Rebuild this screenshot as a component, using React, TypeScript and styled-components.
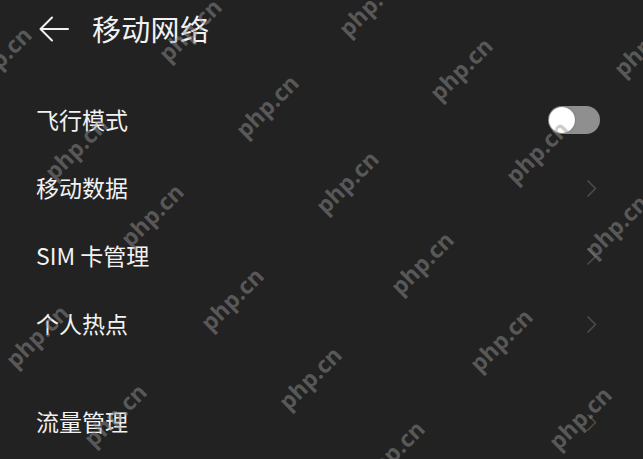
import React, { useState } from "react";
import styled, { createGlobalStyle } from "styled-components";

const GlobalStyle = createGlobalStyle`
  html, body {
    margin: 0;
    padding: 0;
    background: #222222;
  }
  body {
    font-family: "Noto Sans CJK SC", "Noto Sans", sans-serif;
    color: #f2f2f2;
    overflow: hidden;
  }
`;

const Screen = styled.div`
  position: relative;
  width: 643px;
  height: 459px;
  overflow: hidden;
  background: #222222;
`;

const Header = styled.header`
  display: flex;
  align-items: center;
  height: 56px;
  padding-left: 39px;
`;

const BackButton = styled.button`
  display: flex;
  align-items: center;
  margin-top: 2px;
  padding: 0;
  border: 0;
  background: none;
  color: #f2f2f2;
  cursor: pointer;
`;

const Title = styled.h1`
  margin: 0 0 0 23px;
  font-size: 29px;
  font-weight: 400;
  line-height: 1;
  letter-spacing: 0.3px;
`;

const List = styled.div`
  display: flex;
  flex-direction: column;
  margin-top: 30px;
  padding: 0 43px 0 36px;
`;

const Group = styled.div<{ $gap?: number }>`
  display: flex;
  flex-direction: column;
  margin-top: ${(p) => p.$gap ?? 0}px;
`;

const Row = styled.div`
  display: flex;
  align-items: center;
  justify-content: space-between;
  height: 68px;
`;

const Label = styled.span`
  font-size: 23px;
  line-height: 1;
  margin-top: -2px;
`;

const Chevron = styled.span`
  display: flex;
  margin-right: 3px;
`;

const Track = styled.button<{ $on: boolean }>`
  position: relative;
  width: 52px;
  height: 28px;
  padding: 0;
  border: 0;
  border-radius: 14px;
  background: ${(p) => (p.$on ? "#2f7cf6" : "#8f8f8f")};
  cursor: pointer;
`;

const Knob = styled.span<{ $on: boolean }>`
  position: absolute;
  top: 1px;
  left: ${(p) => (p.$on ? "25px" : "1px")};
  width: 26px;
  height: 26px;
  border-radius: 50%;
  background: #ffffff;
  box-shadow: 0 0 2px rgba(0, 0, 0, 0.35);
`;

const Watermarks = styled.div`
  position: absolute;
  inset: 0;
  pointer-events: none;
`;

const Mark = styled.span`
  position: absolute;
  font-family: "Open Sans", "DejaVu Sans", sans-serif;
  font-weight: 700;
  font-size: 23px;
  line-height: 1;
  color: rgba(150, 150, 150, 0.47);
  white-space: nowrap;
  transform: translate(-50%, -50%) rotate(-45deg);
`;

const ArrowLeft = () => (
  <svg width="30" height="26" viewBox="0 0 30 26" fill="none">
    <path
      d="M29 13H2M13 1.5L1.5 13L13 24.5"
      stroke="currentColor"
      strokeWidth="2"
      strokeLinecap="round"
      strokeLinejoin="round"
    />
  </svg>
);

const ChevronRight = () => (
  <Chevron>
    <svg width="11" height="19" viewBox="0 0 11 19" fill="none">
      <path d="M1.5 1.5L9.5 9.5L1.5 17.5" stroke="#4e4a42" strokeWidth="1.6" />
    </svg>
  </Chevron>
);

const Toggle = () => {
  const [on, setOn] = useState(false);
  return (
    <Track $on={on} onClick={() => setOn(!on)} aria-pressed={on}>
      <Knob $on={on} />
    </Track>
  );
};

const marks: [number, number][] = [
  [0, 58],
  [190, 30],
  [267, 106],
  [76, 148],
  [152, 215],
  [370, 5],
  [461, 69],
  [645, 45],
  [537, 152],
  [347, 182],
  [616, 226],
  [232, 299],
  [37, 336],
  [115, 415],
  [310, 378],
  [422, 263],
  [501, 340],
  [580, 418],
  [393, 452],
];

const App = () => (
  <>
    <GlobalStyle />
    <Screen>
      <Header>
        <BackButton aria-label="返回">
          <ArrowLeft />
        </BackButton>
        <Title>移动网络</Title>
      </Header>
      <List>
        <Group>
          <Row>
            <Label>飞行模式</Label>
            <Toggle />
          </Row>
          <Row>
            <Label>移动数据</Label>
            <ChevronRight />
          </Row>
          <Row>
            <Label>SIM 卡管理</Label>
            <ChevronRight />
          </Row>
          <Row>
            <Label>个人热点</Label>
            <ChevronRight />
          </Row>
        </Group>
        <Group $gap={30}>
          <Row>
            <Label>流量管理</Label>
            <ChevronRight />
          </Row>
        </Group>
      </List>
      <Watermarks>
        {marks.map(([x, y], i) => (
          <Mark key={i} style={{ left: x, top: y }}>
            php.cn
          </Mark>
        ))}
      </Watermarks>
    </Screen>
  </>
);

export default App;
